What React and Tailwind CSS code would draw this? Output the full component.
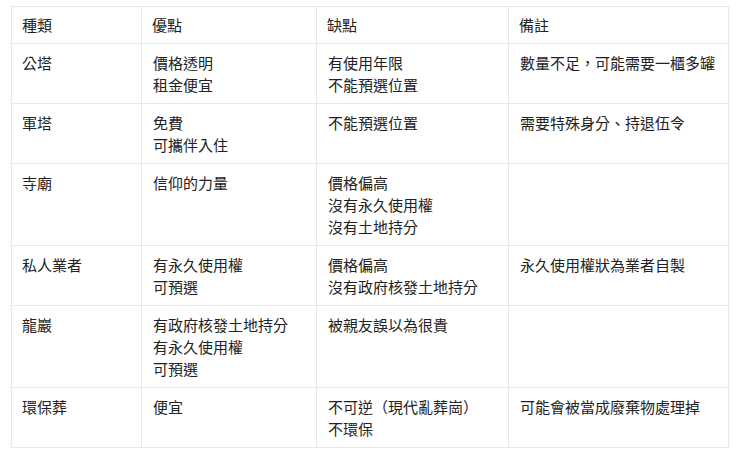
import React from "react";

const rows = [
  ["公塔", ["價格透明", "租金便宜"], ["有使用年限", "不能預選位置"], ["數量不足，可能需要一櫃多罐"]],
  ["軍塔", ["免費", "可攜伴入住"], ["不能預選位置"], ["需要特殊身分、持退伍令"]],
  ["寺廟", ["信仰的力量"], ["價格偏高", "沒有永久使用權", "沒有土地持分"], []],
  ["私人業者", ["有永久使用權", "可預選"], ["價格偏高", "沒有政府核發土地持分"], ["永久使用權狀為業者自製"]],
  ["龍巖", ["有政府核發土地持分", "有永久使用權", "可預選"], ["被親友誤以為很貴"], []],
  ["環保葬", ["便宜"], ["不可逆（現代亂葬崗）", "不環保"], ["可能會被當成廢棄物處理掉"]],
];

export default function App() {
  return (
    <div className="w-[740px] h-[457px] bg-white pt-[6px] pl-[11px] font-['Noto_Sans_CJK_TC','Noto_Sans',sans-serif]">
      <table className="w-[717px] table-fixed border-collapse text-[15px] leading-[22px] text-[#222222]">
        <colgroup>
          <col className="w-[130px]" />
          <col className="w-[175px]" />
          <col className="w-[192px]" />
          <col className="w-[220px]" />
        </colgroup>
        <thead>
          <tr>
            {["種類", "優點", "缺點", "備註"].map((h) => (
              <th key={h} className="border border-[#e8e8e8] text-left font-normal px-[10px] pt-[7px] pb-[7px] align-top">
                {h}
              </th>
            ))}
          </tr>
        </thead>
        <tbody>
          {rows.map((r) => (
            <tr key={r[0]}>
              <td className="border border-[#e8e8e8] px-[10px] pt-[8px] pb-[7px] align-top">{r[0]}</td>
              {[r[1], r[2], r[3]].map((c, i) => (
                <td key={i} className="border border-[#e8e8e8] px-[11px] pt-[8px] pb-[7px] align-top">
                  {c.map((l) => (
                    <div key={l}>{l}</div>
                  ))}
                </td>
              ))}
            </tr>
          ))}
        </tbody>
      </table>
    </div>
  );
}
